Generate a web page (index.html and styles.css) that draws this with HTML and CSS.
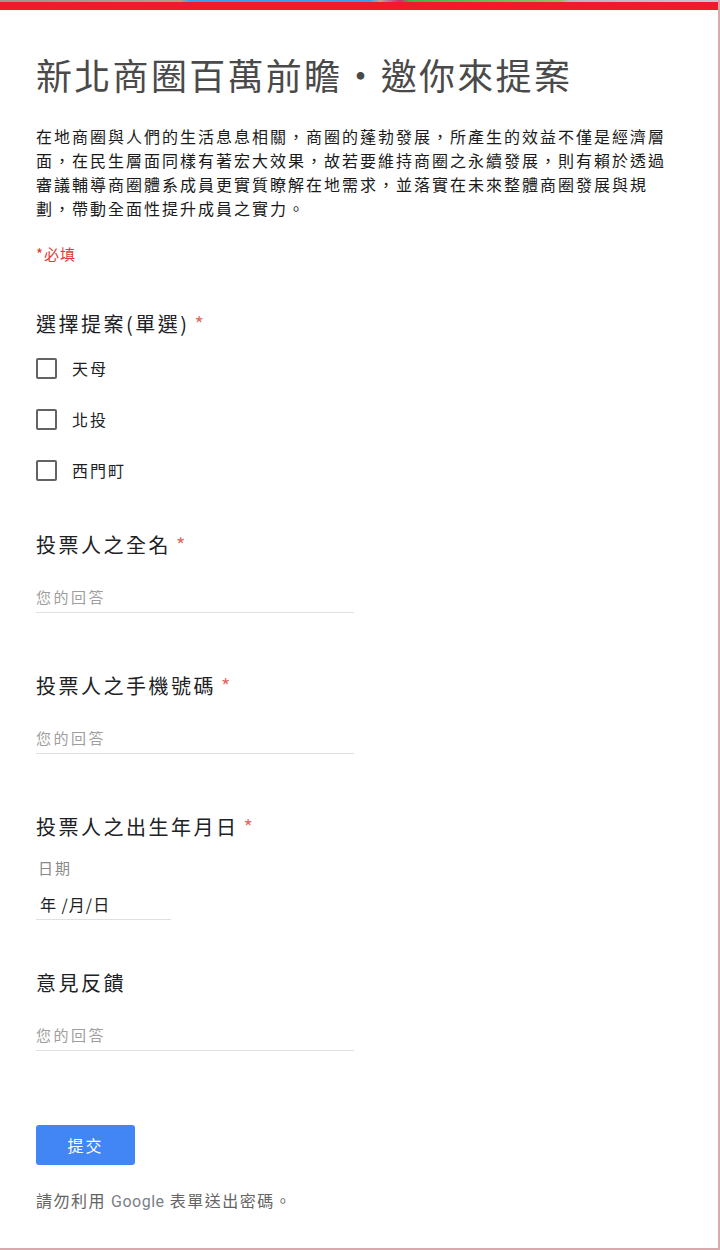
FILE: index.html
```html
<!DOCTYPE html>
<html lang="zh-Hant">
<head>
    <meta charset="UTF-8">
    <meta name="viewport" content="width=device-width, initial-scale=1.0">
    <title>新北商圈百萬前瞻・邀你來提案</title>
    <link rel="stylesheet" href="styles.css">
</head>
<body>
    <div class="page">
        <div class="strip"></div>
        <div class="redbar"></div>

        <div class="form">
            <h1 class="title">新北商圈百萬前瞻・邀你來提案</h1>
            <p class="desc">在地商圈與人們的生活息息相關，商圈的蓬勃發展，所產生的效益不僅是經濟層面，在民生層面同樣有著宏大效果，故若要維持商圈之永續發展，則有賴於透過審議輔導商圈體系成員更實質瞭解在地需求，並落實在未來整體商圈發展與規劃，帶動全面性提升成員之實力。</p>
            <div class="required-note">*必填</div>

            <div class="question first">
                <div class="q-title">選擇提案(單選)<span class="star">*</span></div>
                <div class="options">
                    <label class="option"><span class="box"></span><span class="opt-text">天母</span></label>
                    <label class="option"><span class="box"></span><span class="opt-text">北投</span></label>
                    <label class="option"><span class="box"></span><span class="opt-text">西門町</span></label>
                </div>
            </div>

            <div class="question second">
                <div class="q-title">投票人之全名<span class="star">*</span></div>
                <div class="answer">您的回答</div>
            </div>

            <div class="question">
                <div class="q-title">投票人之手機號碼<span class="star">*</span></div>
                <div class="answer">您的回答</div>
            </div>

            <div class="question">
                <div class="q-title">投票人之出生年月日<span class="star">*</span></div>
                <div class="date-label">日期</div>
                <div class="date-input">年 /月/日</div>
            </div>

            <div class="question last">
                <div class="q-title">意見反饋</div>
                <div class="answer">您的回答</div>
            </div>

            <button class="submit">提交</button>
            <div class="footer-note">請勿利用 <span class="g">Google</span> 表單送出密碼。</div>
        </div>
    </div>
</body>
</html>
```

FILE: styles.css
```css
body {
    margin: 0;
    background: #ffffff;
    font-family: "Noto Sans CJK TC", "Liberation Sans", sans-serif;
    color: #202124;
}
.page {
    width: 720px;
    height: 1250px;
    box-sizing: border-box;
    border-right: 2px solid #d9aaad;
    border-bottom: 2px solid #d9aaad;
    overflow: hidden;
}
.strip {
    height: 2px;
    background: linear-gradient(to right, #9b9a84 0, #a8a18a 180px, #3aa0e6 190px, #3aa0e6 370px, #b0a8a8 380px, #c2336a 400px, #3db54a 410px, #8fbf6a 560px, #b8b8b8 570px, #c8c8c8 720px);
}
.redbar {
    height: 8px;
    background: #f01a2c;
}
.form {
    display: flex;
    flex-direction: column;
    align-items: flex-start;
    padding: 0 42px 0 36px;
}
.title {
    margin: 42px 0 0 0;
    font-size: 36px;
    line-height: 44px;
    font-weight: 400;
    letter-spacing: 2.3px;
    color: #4a4a4a;
}
.desc {
    margin: 28px 0 0 0;
    font-size: 16px;
    line-height: 24px;
    letter-spacing: 2px;
    color: #1a1a1a;
}
.required-note {
    margin-top: 22px;
    font-size: 15px;
    line-height: 24px;
    letter-spacing: 1px;
    color: #e53935;
}
.question {
    margin-top: 58px;
    display: flex;
    flex-direction: column;
    align-items: flex-start;
}
.question.first {
    margin-top: 43px;
}
.question.second {
    margin-top: 45px;
}
.question.last {
    margin-top: 48px;
}
.q-title {
    font-size: 20px;
    line-height: 30px;
    letter-spacing: 2.5px;
    color: #202124;
}
.star {
    margin-left: 5px;
    color: #e46a66;
}
.options {
    margin-top: 14px;
    display: flex;
    flex-direction: column;
    gap: 21px;
}
.option {
    display: flex;
    align-items: center;
    height: 30px;
}
.box {
    width: 17px;
    height: 17px;
    border: 2px solid #636363;
    border-radius: 2px;
}
.opt-text {
    margin-left: 15px;
    font-size: 16px;
    letter-spacing: 2px;
    color: #202124;
}
.answer {
    margin-top: 25px;
    width: 318px;
    font-size: 15px;
    line-height: 24px;
    letter-spacing: 2.5px;
    color: #9e9e9e;
    padding-bottom: 3px;
    border-bottom: 1px solid #e0e0e0;
}
.date-label {
    margin-top: 16px;
    margin-left: 2px;
    font-size: 15px;
    line-height: 20px;
    letter-spacing: 2px;
    color: #8a8a8a;
}
.date-input {
    margin-top: 14px;
    width: 131px;
    padding-left: 4px;
    padding-bottom: 3px;
    font-size: 16px;
    line-height: 24px;
    letter-spacing: 1px;
    color: #202124;
    border-bottom: 1px solid #e0e0e0;
}
.submit {
    margin-top: 74px;
    width: 99px;
    height: 40px;
    border: none;
    border-radius: 3px;
    background: #4285f4;
    color: #ffffff;
    font-family: "Noto Sans CJK TC", sans-serif;
    font-size: 16px;
    letter-spacing: 2px;
    padding: 0;
}
.footer-note {
    margin-top: 23px;
    font-size: 16px;
    line-height: 24px;
    letter-spacing: 1.5px;
    color: #646464;
}
.footer-note .g {
    font-family: Roboto, "Liberation Sans", sans-serif;
    letter-spacing: 0.5px;
    color: #7a7f88;
}
```
